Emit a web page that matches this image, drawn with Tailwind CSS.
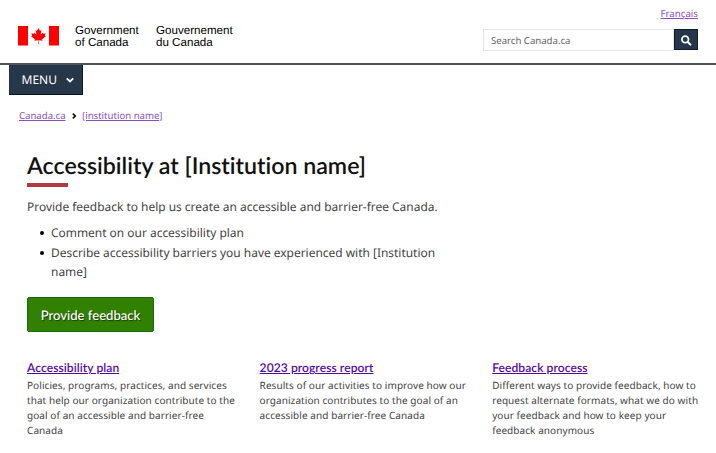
<!DOCTYPE html>
<html lang="en">
<head>
<meta charset="utf-8">
<title>Accessibility at [Institution name]</title>
<script src="https://cdn.jsdelivr.net/npm/@tailwindcss/browser@4"></script>
</head>
<body class="w-[716px] h-[453px] overflow-hidden bg-white text-[#444] font-['Noto_Sans',sans-serif] antialiased [text-rendering:geometricPrecision]">
<header class="h-[65px] border-b-2 border-[#4c5461] pl-[18px] pr-[18px] flex justify-between">
  <div class="flex pt-[25px] font-['Liberation_Sans',sans-serif] text-[11.6px] leading-[11.5px] text-black whitespace-nowrap">
    <svg class="w-[41px] h-5 mt-px" viewBox="0 0 41 20" fill="#f00">
      <rect width="10" height="19.5"/><rect x="31" width="10" height="19.5"/>
      <svg x="12.5" y="1.5" width="16" height="17" viewBox="-2015 -2000 4030 4030"><path d="m-90 2030 45-863a95 95 0 0 0-111-98l-859 151 116-320a65 65 0 0 0-20-73l-941-762 212-99a65 65 0 0 0 34-79l-186-572 542 115a65 65 0 0 0 73-38l105-247 423 454a65 65 0 0 0 111-57l-204-1052 327 189a65 65 0 0 0 91-27l332-652 332 652a65 65 0 0 0 91 27l327-189-204 1052a65 65 0 0 0 111 57l423-454 105 247a65 65 0 0 0 73 38l542-115-186 572a65 65 0 0 0 34 79l212 99-941 762a65 65 0 0 0-20 73l116 320-859-151a95 95 0 0 0-111 98l45 863z"/></svg>
    </svg>
    <div class="ml-4 w-[81px]">Government<br>of Canada</div>
    <div>Gouvernement<br>du Canada</div>
  </div>
  <div class="flex flex-col items-end">
    <a class="mt-[6px] h-[23px] text-[9.7px] leading-[15px] text-[#8a4fc5] underline">Français</a>
    <div class="flex h-[22px] w-[215px]">
      <div class="flex-1 border border-[#e4e4e4] pl-[7px] text-[9.6px] leading-[21px] text-[#666]">Search Canada.ca</div>
      <div class="w-6 h-[21px] border border-[#111a30] bg-[#26374a] flex items-center justify-center">
        <svg class="w-3 h-3" viewBox="0 0 12 12" fill="none" stroke="#fff" stroke-linecap="round"><circle cx="5.2" cy="5.4" r="3.3" stroke-width="1.7"/><path d="m8 8.2 2.4 2.4" stroke-width="2"/></svg>
      </div>
    </div>
  </div>
</header>
<div class="ml-[9px] w-[74px] h-[30px] border-r border-b border-[#0b1422] bg-[#26374a] text-white flex items-center pl-[12.5px] text-[12px]">
  <span class="w-11 pt-px">MENU</span>
  <svg class="w-2 h-2 mt-px" viewBox="0 0 8 8" fill="none" stroke="#fff" stroke-width="1.9"><path d="m.8 2.3 3.2 3.2 3.2-3.2"/></svg>
</div>
<nav class="ml-[19px] h-[55px] pt-[13px] flex text-[9.6px] leading-[15px] text-[#8a4fc5] whitespace-nowrap">
  <a class="underline w-[53px]">Canada.ca</a>
  <svg class="w-[10px] h-[6px] mt-[5px]" viewBox="0 0 10 6" fill="none" stroke="#000" stroke-width="1.5"><path d="m.8.6 2.5 2.4L.8 5.4"/></svg>
  <a class="underline">[institution name]</a>
</nav>
<main class="pl-[27px]">
  <h1 class="h-[33px] font-['Lato',sans-serif] font-semibold text-[23.2px] leading-[31px] text-[#111] whitespace-nowrap [font-variant-ligatures:none]">Accessibility at [Institution name]</h1>
  <div class="w-[41px] h-[4px] bg-[#af3c43]"></div>
  <p class="mt-[9px] h-[27px] text-[11.95px] leading-[21px] whitespace-nowrap">Provide feedback to help us create an accessible and barrier-free Canada.</p>
  <ul class="pl-6 h-[74px] text-[11.95px] leading-[19.6px] whitespace-nowrap">
    <li class="relative before:absolute before:-left-[11px] before:top-[8px] before:size-1 before:rounded-full before:bg-black before:content-['']">Comment on our accessibility plan</li>
    <li class="relative before:absolute before:-left-[11px] before:top-[8px] before:size-1 before:rounded-full before:bg-black before:content-['']">Describe accessibility barriers you have experienced with [Institution<br>name]</li>
  </ul>
  <a class="flex items-center justify-center w-[127px] h-[35px] pt-[2px] rounded-[2px] border border-[#146c12] bg-[#318000] font-['Lato',sans-serif] font-medium text-[13.1px] text-white whitespace-nowrap [text-shadow:1px_1px_1px_#0008]">Provide feedback</a>
  <div class="mt-[27px] grid grid-cols-[232.6px_232.6px_220px] text-[10px] leading-[15.2px] whitespace-nowrap tracking-[0.07px]">
    <section>
      <h2 class="font-['Lato',sans-serif] font-semibold text-[12.05px] leading-[18px] mb-[0.5px] text-[#5309a8] underline">Accessibility plan</h2>
      <p>Policies, programs, practices, and services<br>that help our organization contribute to the<br>goal of an accessible and barrier-free<br>Canada</p>
    </section>
    <section>
      <h2 class="font-['Lato',sans-serif] font-semibold text-[12.05px] leading-[18px] mb-[0.5px] text-[#5309a8] underline">2023 progress report</h2>
      <p>Results of our activities to improve how our<br>organization contributes to the goal of an<br>accessible and barrier-free Canada</p>
    </section>
    <section>
      <h2 class="font-['Lato',sans-serif] font-semibold text-[12.05px] leading-[18px] mb-[0.5px] text-[#5309a8] underline">Feedback process</h2>
      <p>Different ways to provide feedback, how to<br>request alternate formats, what we do with<br>your feedback and how to keep your<br>feedback anonymous</p>
    </section>
  </div>
</main>
</body>
</html>
